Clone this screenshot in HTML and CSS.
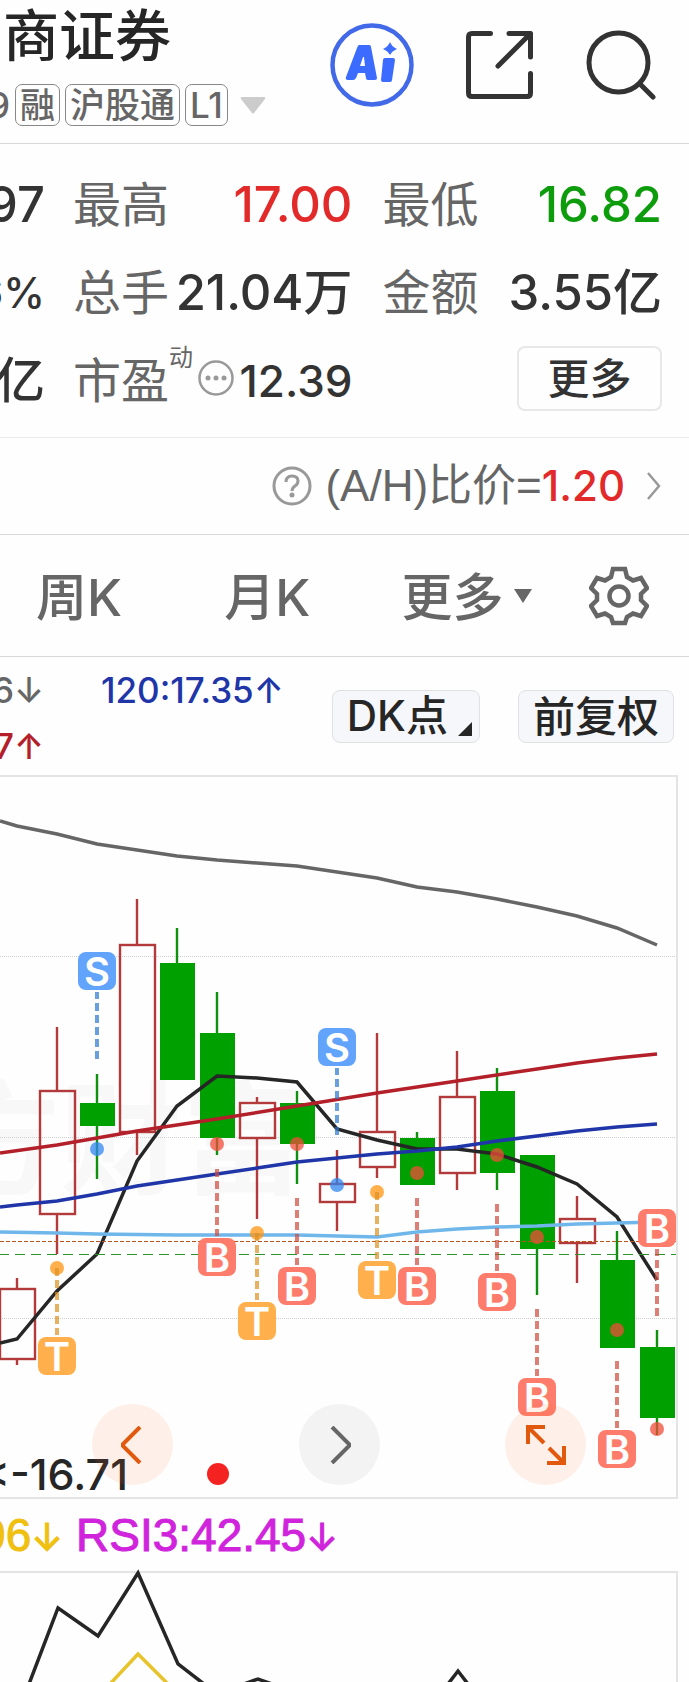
FILE: index.html
```
<!DOCTYPE html>
<html lang="zh-CN">
<head>
    <meta charset="UTF-8">
    <meta name="viewport" content="width=device-width, initial-scale=1">
    <title>个股行情</title>
    <link rel="stylesheet" href="styles.css">
</head>
<body>

<header class="header">
    <div class="stock">
        <h1 class="stock-name">商证券</h1>
        <div class="stock-tags">
            <span class="stock-code"><span>9</span></span>
            <span class="tag">融</span>
            <span class="tag">沪股通</span>
            <span class="tag">L1</span>
            <svg class="tag-arrow" viewBox="0 0 26 18"><path d="M2 1h22q2 0 1 2L14 17q-1 1-2 0L1 3q-1-2 1-2z" fill="#ccc"/></svg>
        </div>
    </div>
    <nav class="header-actions">
        <button class="icon-btn" aria-label="AI">
            <svg width="84" height="84" viewBox="0 0 84 84">
                <circle cx="42" cy="42" r="39.500" fill="none" stroke="#4169e8" stroke-width="4.500"/>
                <path fill="#3b6bff" fill-rule="evenodd" d="M29 22h10q2 0 2 2l6 31q0 2-2 2h-7q-2 0-2-2l-1-5h-7l-2 5q-1 2-3 2h-5q-3 0-2-3l11-29q1-3 2-3zM33 34l-3 9h5l-1-9z"/>
                <path fill="#3b6bff" d="M55 35h8q2 0 2 2l-3 20q0 2-2 2h-7q-2 0-2-2l2-20q0-2 2-2zM60 19q2 5 7 7q-5 2-7 6q-2-4-7-6q5-2 7-7z"/>
            </svg>
        </button>
        <button class="icon-btn" aria-label="分享">
            <svg width="68" height="68" viewBox="0 0 68 68" fill="none" stroke="#333" stroke-width="5" stroke-linecap="round" stroke-linejoin="round">
                <path d="M24.500 2.500H6q-3.500 0-3.500 3.500v56q0 3.500 3.500 3.500h55q3.500 0 3.500-3.500V42.500M43 2.500h21.500V26M64.500 2.500L32 35"/>
            </svg>
        </button>
        <button class="icon-btn" aria-label="搜索">
            <svg width="70" height="70" viewBox="0 0 70 70" fill="none" stroke="#333" stroke-width="5" stroke-linecap="round">
                <circle cx="32.500" cy="32.500" r="29.500"/>
                <path d="M54 54l13 13"/>
            </svg>
        </button>
    </nav>
</header>

<section class="quote">
    <div class="quote-cut"><span>97</span></div>
    <div class="quote-cell"><span class="label">最高</span><span class="value up">17.00</span></div>
    <div class="quote-cell"><span class="label">最低</span><span class="value down">16.82</span></div>

    <div class="quote-cut"><span class="percent">6%</span></div>
    <div class="quote-cell"><span class="label">总手</span><span class="value">21.04万</span></div>
    <div class="quote-cell"><span class="label">金额</span><span class="value">3.55亿</span></div>

    <div class="quote-cut"><span>亿</span></div>
    <div class="quote-cell">
        <span class="label">市盈<sup>动</sup></span>
        <svg class="dots" width="36" height="36" viewBox="0 0 36 36">
            <circle cx="18" cy="18" r="16.500" fill="none" stroke="#999" stroke-width="2.500"/>
            <g fill="#999"><circle cx="10" cy="18" r="2.500"/><circle cx="18" cy="18" r="2.500"/><circle cx="26" cy="18" r="2.500"/></g>
        </svg>
        <span class="value small">12.39</span>
    </div>
    <div class="quote-cell end"><button class="more-btn">更多</button></div>
</section>

<a class="ratio" href="#">
    <svg width="40" height="40" viewBox="0 0 40 40" fill="none" stroke="#999">
        <circle cx="20" cy="20" r="18" stroke-width="3"/>
        <path d="M14 16q0-6 6-6t6 5q0 3-3 5t-3 5" stroke-width="3"/>
        <circle cx="20" cy="29" r="2.500" fill="#999" stroke="none"/>
    </svg>
    <span class="ratio-text">(A/H)比价=<b>1.20</b></span>
    <svg width="14" height="28" viewBox="0 0 14 28" fill="none" stroke="#999" stroke-width="2.500"><path d="M1 1l11 13L1 27"/></svg>
</a>

<nav class="tabs">
    <a href="#">周K</a>
    <a href="#">月K</a>
    <a href="#">更多<svg class="caret" width="18" height="14" viewBox="0 0 18 14"><path d="M0 0h18L9 14z" fill="#666"/></svg></a>
    <button class="icon-btn" aria-label="设置">
        <svg width="60" height="60" viewBox="0 0 60 60" fill="none" stroke="#666" stroke-width="4.500">
            <path d="M24 3h12l2 8 6 3.500 8-2.500 6 10-6 6v6l6 6-6 10-8-2.500-6 3.500-2 6H24l-2-6-6-3.500L8 50 2 40l6-6v-6l-6-6L8 12l8 2.500 6-3.500z"/>
            <circle cx="30" cy="30" r="9.500"/>
        </svg>
    </button>
</nav>

<section class="averages">
    <div class="ma-cut">
        <span class="ma250">6↓</span>
        <span class="ma60">7↑</span>
    </div>
    <div class="ma120">120:17.35↑</div>
    <div class="chart-options">
        <button class="option dk">DK点<svg width="14" height="14" viewBox="0 0 14 14"><path d="M14 0v14H0z" fill="#262626"/></svg></button>
        <button class="option">前复权</button>
    </div>
</section>

<section class="chart">
    <!-- 坐标单位为像素，每根K线间隔40 -->
    <svg class="chart-svg" viewBox="0 777 676 720">
        <text class="watermark" x="304" y="1184">东方财富</text>

        <g class="grid">
            <path d="M0 956.500H676M0 1137.500H676M0 1318.500H676"/>
        </g>

        <!-- 阳线 -->
        <g class="rise">
            <path d="M17 1278v11M17 1359v6M57 1027v64M57 1214v40M137 899v46M137 1132v23M257 1097v6M257 1138v81M337 1150v34M337 1202v29M377 1033v99M377 1167v11M457 1051v46M457 1173v17M577 1196v23M577 1243v40"/>
            <rect x="0" y="1289" width="35" height="70"/>
            <rect x="40" y="1091" width="35" height="123"/>
            <rect x="120" y="945" width="35" height="187"/>
            <rect x="240" y="1103" width="35" height="35"/>
            <rect x="320" y="1184" width="35" height="18"/>
            <rect x="360" y="1132" width="35" height="35"/>
            <rect x="440" y="1097" width="35" height="76"/>
            <rect x="560" y="1219" width="35" height="24"/>
        </g>

        <!-- 阴线 -->
        <g class="fall">
            <path d="M97 1074v105M177 928v152M217 992v163M297 1091v93M417 1132v52M497 1068v122M537 1155v140M617 1231v116M657 1330v105"/>
            <rect x="80" y="1103" width="35" height="23"/>
            <rect x="160" y="963" width="35" height="117"/>
            <rect x="200" y="1033" width="35" height="105"/>
            <rect x="280" y="1103" width="35" height="41"/>
            <rect x="400" y="1138" width="35" height="47"/>
            <rect x="480" y="1091" width="35" height="82"/>
            <rect x="520" y="1155" width="35" height="94"/>
            <rect x="600" y="1260" width="35" height="88"/>
            <rect x="640" y="1347" width="35" height="71"/>
        </g>

        <!-- 均线 -->
        <polyline class="line" stroke="#666" points="0,821 17,826 57,834 97,844 137,850 177,856 217,860 257,863 297,866 337,872 377,878 417,887 457,892 497,899 537,907 577,916 617,928 657,945"/>
        <polyline class="line" stroke="#262626" points="0,1343 17,1339 57,1291 97,1254 137,1161 177,1106 217,1076 257,1078 297,1082 337,1129 377,1140 417,1149 457,1149 497,1154 537,1167 577,1184 617,1217 657,1280"/>
        <polyline class="line" stroke="#b3202a" points="0,1153 57,1145 97,1138 137,1131 217,1119 297,1106 377,1093 457,1081 537,1069 577,1063 617,1058 657,1054"/>
        <polyline class="line" stroke="#2036a8" points="0,1207 17,1205 57,1201 97,1194 137,1186 177,1180 217,1174 257,1168 297,1162 337,1158 377,1154 417,1151 457,1147 497,1141 537,1136 577,1131 617,1127 657,1124"/>
        <polyline class="line" stroke="#6fb7ea" points="0,1232 57,1233 97,1234 177,1235 297,1235 337,1236 377,1237 417,1232 457,1229 497,1227 537,1226 577,1224 617,1223 657,1222"/>
        <path class="cost" d="M0 1241.500H678"/>
        <path class="last" d="M0 1254.500H676"/>

        <!-- 买卖点 -->
        <g class="mark sell">
            <circle cx="97" cy="1149" r="7"/><path d="M97 1059V992"/><rect x="78" y="952" width="38" height="38" rx="8"/><text x="97" y="986">S</text>
            <circle cx="337" cy="1185" r="7"/><path d="M337 1135V1068"/><rect x="318" y="1028" width="38" height="38" rx="8"/><text x="337" y="1062">S</text>
        </g>
        <g class="mark hold">
            <circle cx="57" cy="1268" r="7"/><path d="M57 1268v67"/><rect x="38" y="1337" width="38" height="38" rx="8"/><text x="57" y="1371">T</text>
            <circle cx="257" cy="1233" r="7"/><path d="M257 1233v67"/><rect x="238" y="1302" width="38" height="38" rx="8"/><text x="257" y="1336">T</text>
            <circle cx="377" cy="1192" r="7"/><path d="M377 1192v67"/><rect x="358" y="1261" width="38" height="38" rx="8"/><text x="377" y="1295">T</text>
        </g>
        <g class="mark buy">
            <circle cx="217" cy="1144" r="7"/><path d="M217 1169v67"/><rect x="198" y="1238" width="38" height="38" rx="8"/><text x="217" y="1272">B</text>
            <circle cx="297" cy="1144" r="7"/><path d="M297 1198v67"/><rect x="278" y="1267" width="38" height="38" rx="8"/><text x="297" y="1301">B</text>
            <circle cx="417" cy="1173" r="7"/><path d="M417 1198v67"/><rect x="398" y="1267" width="38" height="38" rx="8"/><text x="417" y="1301">B</text>
            <circle cx="497" cy="1155" r="7"/><path d="M497 1204v67"/><rect x="478" y="1273" width="38" height="38" rx="8"/><text x="497" y="1307">B</text>
            <circle cx="537" cy="1237" r="7"/><path d="M537 1309v67"/><rect x="518" y="1378" width="38" height="38" rx="8"/><text x="537" y="1412">B</text>
            <circle cx="617" cy="1330" r="7"/><path d="M617 1361v67"/><rect x="598" y="1430" width="38" height="38" rx="8"/><text x="617" y="1464">B</text>
            <circle cx="657" cy="1429" r="7"/><path d="M657 1316v-67"/><rect x="638" y="1209" width="38" height="38" rx="8"/><text x="657" y="1243">B</text>
        </g>

        <text class="low" x="128" y="1490">&lt;-16.71</text>
        <circle cx="218" cy="1474" r="11" fill="#f52222"/>
    </svg>

    <div class="chart-tools">
        <button class="tool" aria-label="向左"><svg width="24" height="38" viewBox="0 0 24 38"><path d="M19 1L1 19l18 18"/></svg></button>
        <button class="tool gray" aria-label="向右"><svg width="24" height="38" viewBox="0 0 24 38"><path d="M5 1l18 18L5 37"/></svg></button>
        <button class="tool" aria-label="全屏"><svg width="40" height="40" viewBox="0 0 40 40"><path d="M19 2H2v17M2 2l16 16M38 21v17H21M38 38L23 23"/></svg></button>
    </div>
</section>

<div class="rsi-values">
    <span class="rsi-cut"><span>96<i>↓</i></span></span>
    <span class="rsi3">RSI3:42.45<i>↓</i></span>
</div>

<section class="chart rsi">
    <svg class="chart-svg" viewBox="0 1573 676 109">
        <polyline class="line" stroke="#262626" points="29,1684 58,1608 98,1636 138,1573 178,1664 204,1684"/>
        <polyline class="line" stroke="#262626" points="244,1684 258,1679 272,1684"/>
        <polyline class="line" stroke="#262626" points="448,1684 458,1671 468,1684"/>
        <polyline class="line" stroke="#e8c32a" points="110,1684 138,1654 168,1684"/>
    </svg>
</section>

</body>
</html>
```
FILE: styles.css
```
html, body, h1, button {
    padding: 0;
    margin: 0;
}

body {
    background: #fefefe;
    color: #333;
    font-family: Inter, "Liberation Sans", "Noto Sans CJK SC", sans-serif;
    font-weight: 500;
    overflow-x: hidden;
}

a {
    color: inherit;
    text-decoration: none;
}

button {
    font: inherit;
    color: inherit;
    background: none;
    border: 0;
}

svg {
    display: block;
    flex: none;
}

/* 顶部 */
.header {
    display: flex;
    justify-content: space-between;
    height: 143px;
    border-bottom: 1px solid #d8d8d8;
}

.stock-name {
    height: 72px;
    padding-left: 3px;
    font-size: 56px;
    line-height: 72px;
    font-weight: 500;
    color: #262626;
}

.stock-tags {
    display: flex;
    align-items: center;
    gap: 5px;
    margin-top: 12px;
    color: #666;
    font-size: 35px;
}

.stock-code {
    width: 10px;
    display: flex;
    justify-content: flex-end;
    overflow: hidden;
}

.tag {
    height: 40px;
    padding: 0 4px;
    line-height: 40px;
    border: 1px solid #888;
    border-radius: 7px;
}

.tag-arrow {
    width: 26px;
    margin-left: 7px;
}

.header-actions {
    display: flex;
    align-items: center;
    gap: 52px;
    height: 129px;
    padding-right: 33px;
}

/* 行情数据 */
.quote {
    display: grid;
    grid-template-columns: 43px 1fr 1fr;
    column-gap: 30px;
    grid-auto-rows: 88px;
    align-items: center;
    padding: 17px 27px 12px 0;
    border-bottom: 1px solid #ececec;
    font-size: 49px;
    line-height: 88px;
}

.quote-cut {
    display: flex;
    justify-content: flex-end;
    margin-right: -2px;
    overflow: hidden;
}

.percent {
    font-size: 42px;
}

.quote-cell {
    display: flex;
    align-items: center;
    justify-content: space-between;
    white-space: nowrap;
}

.quote-cell.end {
    justify-content: flex-end;
}

.label {
    color: #666;
    font-size: 48px;
    font-weight: 400;
}

.label sup {
    display: inline-block;
    font-size: 24px;
    line-height: 24px;
    vertical-align: 32px;
}

.dots {
    margin-bottom: 6px;
}

.value.small {
    font-size: 44px;
}

.up {
    color: #e22a2a;
}

.down {
    color: #0c9c0c;
}

.more-btn {
    width: 145px;
    height: 65px;
    margin-bottom: 5px;
    border: 2px solid #e8e8e8;
    border-radius: 8px;
    font-size: 42px;
    line-height: 60px;
}

/* AH比价 */
.ratio {
    display: flex;
    align-items: center;
    justify-content: flex-end;
    height: 96px;
    padding-right: 28px;
    border-bottom: 1px solid #d8d8d8;
    color: #666;
    font-family: "Liberation Sans", "Noto Sans CJK SC", sans-serif;
    font-size: 44px;
    font-weight: 400;
}

.ratio-text {
    margin: 0 22px 0 13px;
    line-height: 92px;
}

.ratio b {
    color: #e22a2a;
    font-family: Inter, sans-serif;
    font-size: 42px;
    font-weight: 500;
}

/* 周期切换 */
.tabs {
    display: grid;
    grid-template-columns: 188fr 177fr 187fr 100fr;
    align-items: center;
    height: 121px;
    padding-left: 36px;
    border-bottom: 1px solid #d8d8d8;
    color: #666;
    font-size: 51px;
}

.tabs a {
    display: flex;
    align-items: center;
    padding-top: 4px;
    line-height: 72px;
}

.caret {
    margin-left: 10px;
    margin-bottom: 4px;
}

/* 均线数值 */
.averages {
    display: flex;
    height: 118px;
    padding-right: 15px;
    font-size: 35px;
    line-height: 56px;
}

.ma-cut {
    display: flex;
    flex-direction: column;
    align-items: flex-end;
    width: 44px;
    padding-top: 5px;
    overflow: hidden;
}

.ma250 {
    color: #666;
}

.ma60 {
    color: #b3202a;
}

.ma120 {
    padding: 5px 0 0 57px;
    color: #2036a8;
}

.chart-options {
    display: flex;
    gap: 38px;
    margin-left: auto;
    padding-top: 33px;
}

.option {
    height: 53px;
    padding: 0 14px;
    border: 1px solid #dfe1e5;
    border-radius: 8px;
    background: #f6f7fa;
    color: #262626;
    font-size: 42px;
    line-height: 50px;
}

.dk {
    display: flex;
    padding-right: 7px;
    gap: 10px;
}

.dk svg {
    align-self: flex-end;
    margin-bottom: 6px;
}

/* K线图 */
.chart {
    position: relative;
    margin-right: 11px;
    border: solid #e4e4e4;
    border-width: 2px 2px 2px 0;
}

.chart-svg {
    width: 100%;
    overflow: visible;
}

.watermark {
    fill: #f8f8f8;
    font-size: 122px;
    font-weight: 700;
    text-anchor: end;
}

.grid {
    stroke: #d0d0d0;
    stroke-dasharray: 1 1;
}

.rise {
    fill: none;
    stroke: #b23a3a;
    stroke-width: 2.4;
}

.fall {
    fill: #00a000;
}

.fall path {
    stroke: #0f900f;
    stroke-width: 2.4;
}

.line {
    fill: none;
    stroke-width: 3.5;
}

.cost {
    stroke: #b8541c;
    stroke-dasharray: 4 2;
}

.last {
    stroke: #2a942a;
    stroke-dasharray: 10 6;
    stroke-dashoffset: 1;
}

.mark circle {
    fill-opacity: 0.75;
}

.mark path {
    stroke-width: 4;
    stroke-dasharray: 8 4;
    opacity: 0.7;
}

.mark text {
    fill: #fff;
    font-size: 40px;
    font-weight: 600;
    text-anchor: middle;
}

.sell {
    fill: #62a3fb;
}

.sell circle {
    fill: #2f86f0;
}

.sell path {
    stroke: #2c78d0;
}

.hold {
    fill: #ffb04c;
}

.hold circle {
    fill: #ff9410;
}

.hold path {
    stroke: #dd9120;
}

.buy {
    fill: #fd7c6c;
}

.buy circle {
    fill: #f04c38;
}

.buy path {
    stroke: #d04a3c;
}

.low {
    fill: #262626;
    font-size: 43px;
    text-anchor: end;
}

.chart-tools {
    position: absolute;
    left: 0;
    right: 0;
    bottom: 12px;
    display: flex;
    justify-content: space-between;
    padding: 0 90px 0 92px;
}

.tool {
    display: flex;
    align-items: center;
    justify-content: center;
    width: 81px;
    height: 81px;
    border-radius: 50%;
    background: rgba(255, 110, 40, 0.1);
}

.tool.gray {
    background: rgba(60, 60, 60, 0.06);
}

.tool path {
    fill: none;
    stroke: #e0590f;
    stroke-width: 4;
}

.tool.gray path {
    stroke: #666;
}

/* RSI */
.rsi-values {
    display: flex;
    gap: 13px;
    height: 72px;
    font-family: "Liberation Sans", sans-serif;
    font-size: 46px;
    font-weight: 400;
    line-height: 72px;
    -webkit-text-stroke: 1px currentColor;
}

.rsi-values i {
    font-family: Inter, sans-serif;
    font-size: 38px;
    font-style: normal;
}

.rsi-cut {
    display: flex;
    justify-content: flex-end;
    width: 63px;
    overflow: hidden;
    color: #f0c010;
}

.rsi3 {
    color: #d024dc;
}

.rsi {
    border-bottom: 0;
}
```
